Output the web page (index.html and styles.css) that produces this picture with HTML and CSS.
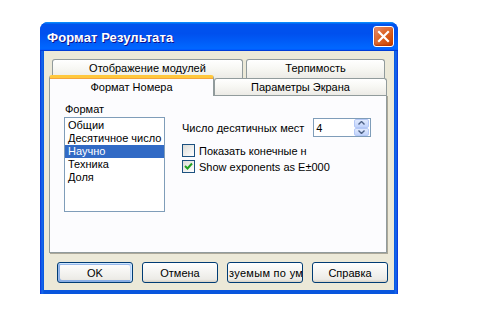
FILE: index.html
```html
<!DOCTYPE html>
<html>
  <head>
    <title>Формат Результата</title>
    <link rel="stylesheet" href="styles.css">
  </head>

  <body>
    <div class="page">
      <div class="window">
        <div class="titlebar">
          <div class="title">Формат Результата</div>
          <div class="close">
            <svg width="13" height="13" viewBox="0 0 13 13">
              <path d="M2 2 L11 11 M11 2 L2 11" stroke="#fff" stroke-width="2.2" stroke-linecap="square"/>
            </svg>
          </div>
        </div>

        <div class="frame">
          <div class="tabs-top">
            <div class="tab tab-wide">Отображение модулей</div>
            <div class="tab tab-narrow">Терпимость</div>
          </div>
          <div class="tabs-bottom">
            <div class="tab tab-active">Формат Номера</div>
            <div class="tab tab-screen">Параметры Экрана</div>
          </div>

          <div class="panel">
            <div class="format-col">
              <div class="label">Формат</div>
              <div class="listbox">
                <div class="item">Общии</div>
                <div class="item">Десятичное число</div>
                <div class="item selected">Научно</div>
                <div class="item">Техника</div>
                <div class="item">Доля</div>
              </div>
            </div>

            <div class="options">
              <div class="row">
                <span>Число десятичных мест</span>
                <div class="spin">
                  <span class="spin-value">4</span>
                  <div class="spin-buttons">
                    <div class="spin-btn">
                      <svg width="7" height="4" viewBox="0 0 7 4"><path d="M0.5 3.5 L3.5 0.5 L6.5 3.5" fill="none" stroke="#4D6185" stroke-width="1.4"/></svg>
                    </div>
                    <div class="spin-btn">
                      <svg width="7" height="4" viewBox="0 0 7 4"><path d="M0.5 0.5 L3.5 3.5 L6.5 0.5" fill="none" stroke="#4D6185" stroke-width="1.4"/></svg>
                    </div>
                  </div>
                </div>
              </div>

              <label class="check">
                <span class="box"></span>
                <span class="check-text">Показать конечные н</span>
              </label>
              <label class="check">
                <span class="box">
                  <svg width="9" height="9" viewBox="0 0 9 9"><path d="M1 4 L3.5 6.5 L8 1.5" fill="none" stroke="#21A121" stroke-width="2"/></svg>
                </span>
                <span class="check-text">Show exponents as E±000</span>
              </label>
            </div>
          </div>

          <div class="buttons">
            <div class="btn btn-default">OK</div>
            <div class="btn">Отмена</div>
            <div class="btn btn-cut"><span class="btn-clip">зуемым по умо</span></div>
            <div class="btn">Справка</div>
          </div>
        </div>
      </div>
    </div>
  </body>
</html>
```

FILE: styles.css
```css
* {
  box-sizing: border-box;
  margin: 0;
  padding: 0;
}

body {
  background: #fff;
  font-family: "Liberation Sans", Arial, sans-serif;
  font-size: 11px;
  color: #000;
}

.page {
  padding: 22px 0 0 40px;
}

.window {
  width: 358px;
  height: 272px;
  display: flex;
  flex-direction: column;
  background: linear-gradient(to right, #0831d9 0, #166aee 2px, #0855dd 4px, #0855dd 354px, #166aee 356px, #0831d9 358px);
  border-radius: 8px 8px 0 0;
  overflow: hidden;
}

.titlebar {
  height: 29px;
  display: flex;
  align-items: center;
  justify-content: space-between;
  padding: 0 4px 0 7px;
  background: linear-gradient(180deg, #0997ff 0, #0053ee 8%, #0050ee 40%, #06f 88%, #06f 93%, #005bff 95%, #003dd7 96%, #003dd7 100%);
}

.title {
  padding-top: 2px;
  color: #fff;
  font-size: 13px;
  font-weight: bold;
  letter-spacing: 0.1px;
  text-shadow: 1px 1px #0f1089;
}

.close {
  width: 21px;
  height: 21px;
  display: flex;
  align-items: center;
  justify-content: center;
  border: 1px solid #fff;
  border-radius: 3px;
  background: radial-gradient(circle at 90% 90%, #cc4600 0, #dc6527 55%, #e5947d 100%);
  box-shadow: inset 0 -1px 2px #b03000;
}

.frame {
  flex: 1;
  margin: 0 4px 4px;
  background: #ece9d8;
  padding-top: 8px;
  display: flex;
  flex-direction: column;
}

.tabs-top {
  display: flex;
  gap: 3px;
  margin-left: 8px;
}

.tab {
  display: flex;
  align-items: center;
  justify-content: center;
  border: 1px solid #919b9c;
  border-bottom: none;
  border-radius: 3px 3px 0 0;
  background: linear-gradient(180deg, #fff 0, #f7f7f3 50%, #ecebe6 100%);
  white-space: nowrap;
}

.tab-wide {
  width: 191px;
  height: 19px;
  padding-bottom: 2px;
}

.tab-narrow {
  width: 139px;
  height: 19px;
  padding-bottom: 2px;
}

.tabs-bottom {
  display: flex;
  align-items: flex-end;
  margin: -3px 0 0 5px;
  position: relative;
  z-index: 1;
}

.tab-active {
  width: 165px;
  height: 21px;
  border-top: 3px solid #ffc83c;
  box-shadow: inset 0 1px #f4a43c;
  background: #fcfcfe;
  margin-bottom: -1px;
  padding-bottom: 1px;
}

.tab-screen {
  width: 173px;
  height: 17px;
}

.panel {
  width: 338px;
  height: 158px;
  margin-left: 5px;
  border: 1px solid #919b9c;
  background: #fcfcfe;
  box-shadow: 1px 1px 0 #aca899;
  display: flex;
  gap: 17px;
  padding: 7px 0 0 14px;
}

.format-col {
  display: flex;
  flex-direction: column;
  gap: 1px;
}

.label {
  line-height: 13px;
  padding-left: 1px;
}

.listbox {
  width: 101px;
  height: 95px;
  border: 1px solid #7f9db9;
  background: #fff;
  padding-top: 1px;
}

.item {
  height: 13px;
  line-height: 13px;
  padding-left: 3px;
  white-space: nowrap;
}

.item.selected {
  background: #316ac5;
  color: #fff;
}

.options {
  display: flex;
  flex-direction: column;
  padding-top: 15px;
  gap: 3px;
}

.row {
  display: flex;
  align-items: center;
  gap: 9px;
  margin-bottom: 4px;
}

.spin {
  width: 58px;
  height: 19px;
  border: 1px solid #7f9db9;
  background: #fff;
  display: flex;
  align-items: center;
  justify-content: space-between;
  padding: 0 1px 0 2px;
}

.spin-buttons {
  display: flex;
  flex-direction: column;
  width: 15px;
  height: 17px;
}

.spin-btn {
  flex: 1;
  display: flex;
  align-items: center;
  justify-content: center;
  background: linear-gradient(180deg, #e1eafe 0, #c1d3fb 100%);
  border: 1px solid #b4c8f6;
  border-radius: 2px;
}

.check {
  display: flex;
  align-items: center;
  gap: 4px;
  height: 13px;
}

.box {
  width: 13px;
  height: 13px;
  border: 1px solid #1c5180;
  background: linear-gradient(135deg, #dcdcd7 0, #fff 100%);
  display: flex;
  align-items: center;
  justify-content: center;
}

.buttons {
  display: flex;
  gap: 9px;
  margin: 9px 0 0 13px;
}

.btn {
  width: 76px;
  height: 21px;
  display: flex;
  align-items: center;
  justify-content: center;
  overflow: hidden;
  white-space: nowrap;
  border: 1px solid #003c74;
  border-radius: 3px;
  background: linear-gradient(180deg, #fff 0, #ecebe6 86%, #d6d0c5 100%);
}

.btn-default {
  box-shadow: inset -1px 1px #cee7ff, inset 1px 2px #98b8ea, inset -2px 2px #bcd4f6, inset 1px -1px #89ade4, inset 2px -2px #89ade4;
}

.btn-cut {
  justify-content: flex-start;
  padding-left: 1px;
}

.btn-clip {
  flex-shrink: 0;
  letter-spacing: 0.3px;
}
```
